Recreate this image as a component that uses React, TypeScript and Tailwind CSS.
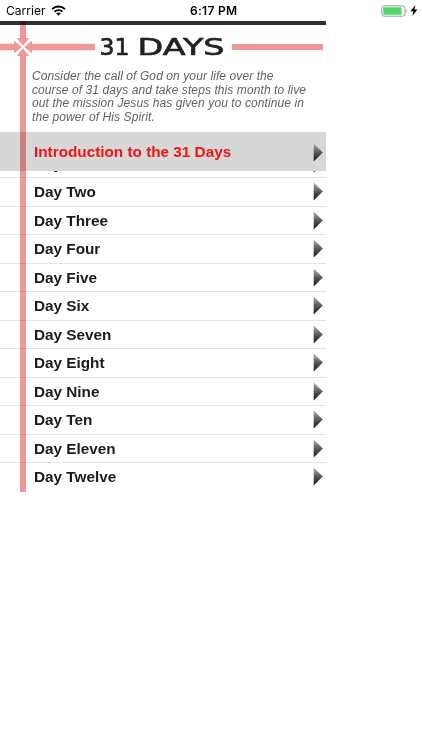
const days = [
  "Two", "Three", "Four", "Five", "Six", "Seven",
  "Eight", "Nine", "Ten", "Eleven", "Twelve",
];

function Arrow() {
  return (
    <svg className="h-[19px] w-[10px] shrink-0" viewBox="0 0 10 19">
      <defs>
        <linearGradient id="arrow" x1="0" y1="0" x2="0" y2="1">
          <stop offset="0" stopColor="#b4b4b4" />
          <stop offset="0.5" stopColor="#5a5a5a" />
          <stop offset="1" stopColor="#111111" />
        </linearGradient>
      </defs>
      <path d="M0.7 0.4 L9.8 9.5 L0.7 18.6 Z" fill="url(#arrow)" />
    </svg>
  );
}

function DayRow({ name }: { name: string }) {
  return (
    <li className="flex h-[28.5px] shrink-0 items-center justify-between border-t border-[#e4e4e6] pl-[34px] pr-[3px]">
      <span className="pt-[0.5px] text-[15.3px] leading-[18px] font-bold text-[#1b1b1b]">Day {name}</span>
      <Arrow />
    </li>
  );
}

function StatusBar() {
  return (
    <header className="flex h-[21px] items-center justify-between pl-[6px] pr-[4px] font-['Inter',sans-serif] text-black">
      <div className="flex w-[184px] items-center gap-[5px]">
        <span className="text-[12px] leading-none tracking-[0.05px]">Carrier</span>
        <svg className="h-[11px] w-[15px]" viewBox="0 0 15 11">
          <path d="M1.1 4.1 A9.2 9.2 0 0 1 13.9 4.1" fill="none" stroke="#000" strokeWidth="2" />
          <path d="M3.5 6.7 A5.8 5.8 0 0 1 11.5 6.7" fill="none" stroke="#000" strokeWidth="1.9" />
          <path d="M5.2 8.3 Q7.5 6.5 9.8 8.3 L7.5 10.7 Z" fill="#000" />
        </svg>
      </div>
      <span className="grow text-[12px] leading-none font-semibold tracking-[0.3px]">6:17 PM</span>
      <div className="flex items-center gap-[1px]">
        <svg className="h-[12px] w-[28px]" viewBox="0 0 28 12">
          <rect x="0.8" y="0.8" width="23.4" height="10.4" rx="2.6" fill="#fff" stroke="#999" strokeWidth="1" />
          <rect x="2.3" y="2.3" width="18.2" height="7.4" rx="1" fill="#4cd964" />
          <path d="M25.4 4.2 Q27 6 25.4 7.8 Z" fill="#999" />
        </svg>
        <svg className="h-[11px] w-[8px]" viewBox="0 0 7 10">
          <path d="M4.8 0 L0.3 5.6 H3 L2 10 L6.7 4.1 H3.9 Z" fill="#000" />
        </svg>
      </div>
    </header>
  );
}

export default function App() {
  return (
    <div className="h-[750px] w-[422px] overflow-hidden bg-white font-['Liberation_Sans',Arial,sans-serif]">
      <StatusBar />
      <main className="relative w-[326px]">
        <div className="h-[3.5px] bg-[#2f2f31]" />
        <div className="flex h-[44.5px] items-center">
          <svg className="h-[44px] w-[95px] shrink-0" viewBox="0 0 95 44">
            <g fill="#ef9896">
              <path d="M0 18.7 H14 V15.8 L21.8 22 L14 28.2 V25.3 H0 Z" />
              <path d="M95 18.7 H32 V15.8 L24.2 22 L32 28.2 V25.3 H95 Z" />
              <path d="M20 9 V13 H16.8 L23 20.8 L29.2 13 H26 V9 Z" />
              <path d="M20 35 V31 H16.8 L23 23.2 L29.2 31 H26 V35 Z" />
            </g>
          </svg>
          <h1 className="flex w-[137px] justify-center">
            <svg className="h-[26px] w-[137px]" viewBox="0 0 137 26" fontFamily="DejaVu Sans, sans-serif" fontSize="22.5" fill="#222" stroke="#222" strokeWidth="0.6">
              <text y="21" x="4.5" textLength="30" lengthAdjust="spacingAndGlyphs">31</text>
              <text y="21" x="42.5" textLength="87" lengthAdjust="spacingAndGlyphs">DAYS</text>
            </svg>
          </h1>
          <div className="h-[6.5px] w-[91px] bg-[#ef9896]" />
        </div>
        <p className="h-[63px] whitespace-nowrap pl-[32px] pt-[1px] text-[12px] leading-[13.6px] tracking-[0.09px] italic text-[#626262]">
          Consider the call of God on your life over the<br />
          course of 31 days and take steps this month to live<br />
          out the mission Jesus has given you to continue in<br />
          the power of His Spirit.
        </p>
        <div className="flex h-[39px] items-center justify-between bg-[#d7d7d7] pl-[34px] pr-[3px]">
          <span className="text-[15.3px] leading-[18px] font-bold text-[#ed1515]">Introduction to the 31 Days</span>
          <div className="pt-[2px]"><Arrow /></div>
        </div>
        <ul className="flex h-[6px] flex-col justify-end overflow-hidden">
          <li className="flex h-[27px] shrink-0 items-center justify-between pl-[34px] pr-[3px]">
            <span className="text-[15.3px] leading-[18px] font-bold text-[#1b1b1b]">Day One</span>
            <Arrow />
          </li>
        </ul>
        <ul>
          {days.map((day) => <DayRow key={day} name={day} />)}
        </ul>
        <div className="absolute top-0 left-[20px] h-[12.5px] w-[6px] bg-[#ef9896] mix-blend-multiply" />
        <div className="absolute top-[38.5px] left-[20px] h-[432.5px] w-[6px] bg-[#ef9896] mix-blend-multiply" />
      </main>
    </div>
  );
}
